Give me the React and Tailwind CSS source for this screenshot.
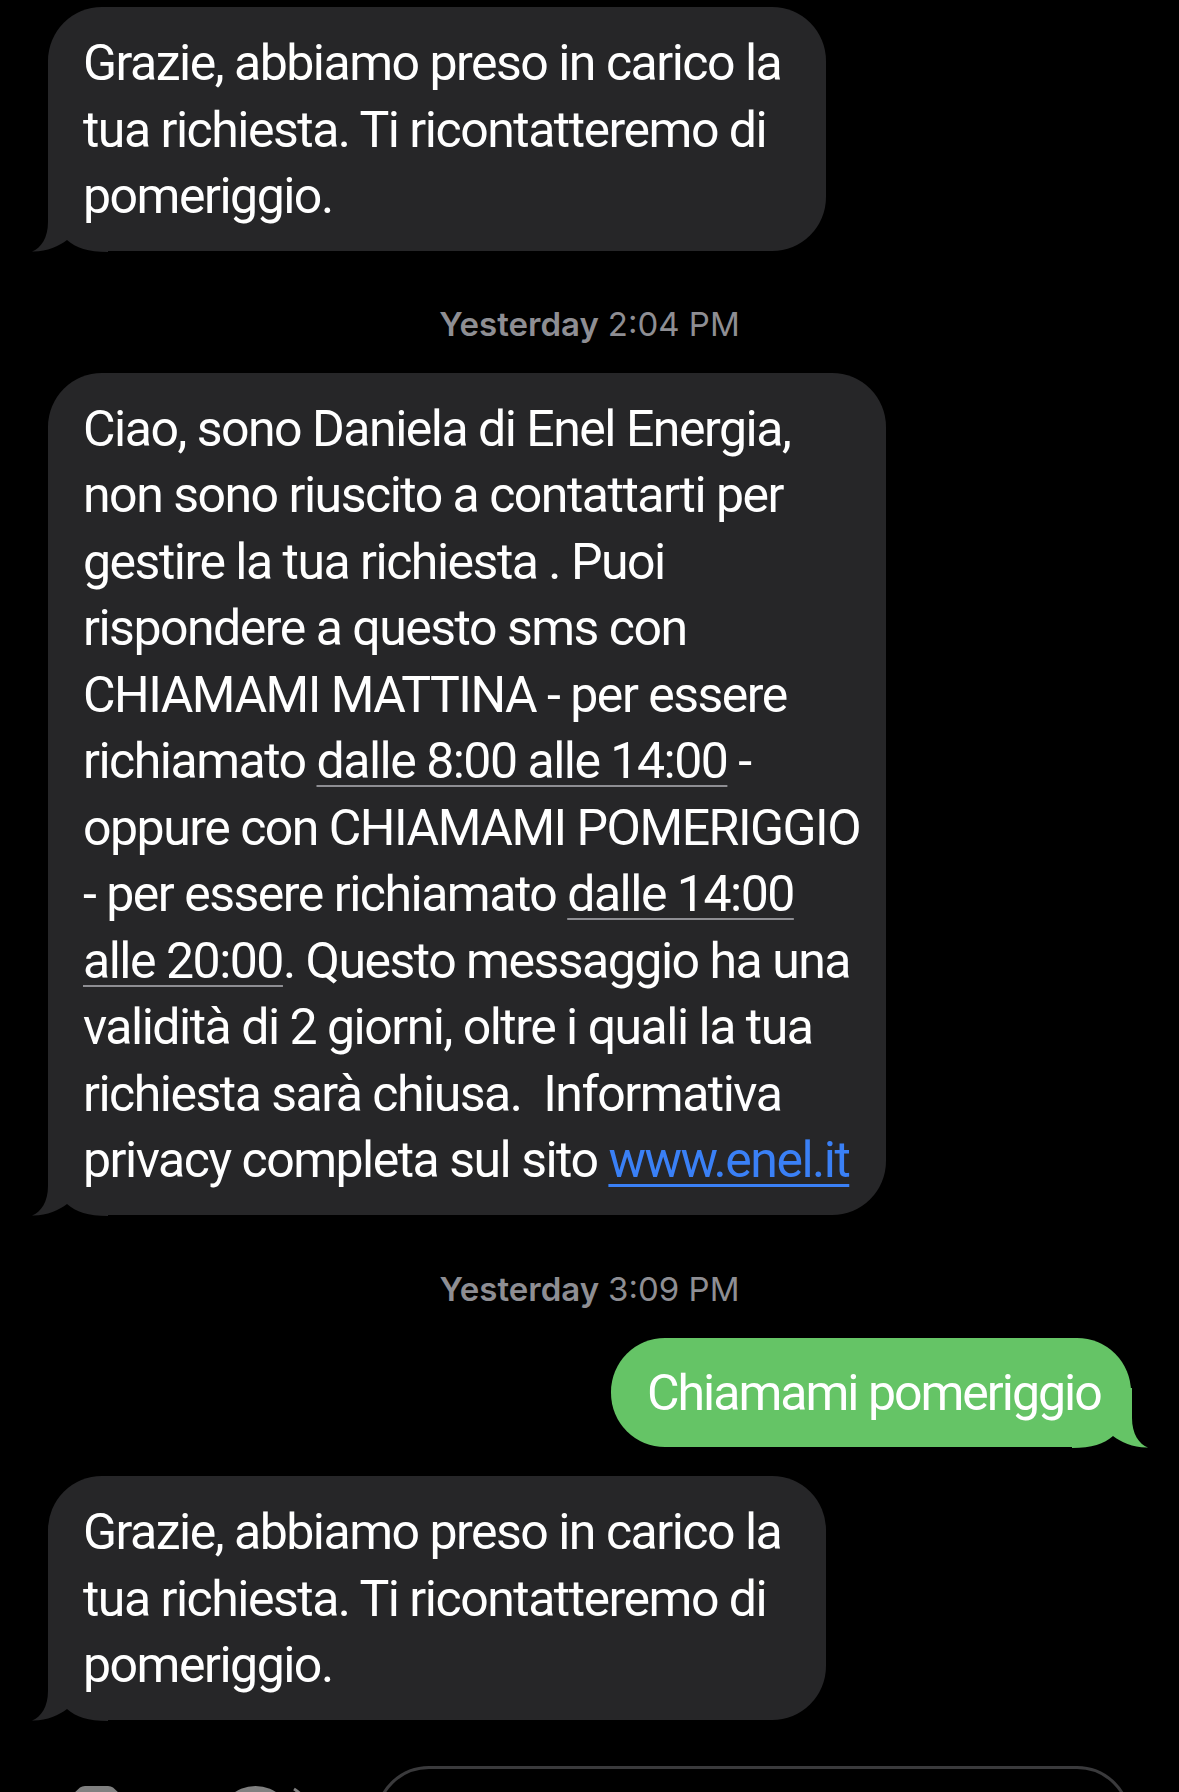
import React from "react";

const FONT = { fontFamily: "Roboto, Inter, 'Liberation Sans', sans-serif" };
const STAMP_FONT = { fontFamily: "Inter, 'Liberation Sans', sans-serif" };

function TailLeft({ color }) {
  return (
    <svg
      className="absolute left-[-16px] bottom-[-1px]"
      width="76"
      height="60"
      viewBox="0 0 76 60"
    >
      <path
        d="M16 0 L16 30 C16 46 9 56 0 59.5 C14 60 27 54 35 48 C44 56 56 60 76 60 L76 0 Z"
        fill={color}
      />
    </svg>
  );
}

function TailRight({ color }) {
  return (
    <svg
      className="absolute right-[-17px] bottom-[-1px]"
      width="76"
      height="60"
      viewBox="0 0 76 60"
    >
      <path
        d="M60 0 L60 30 C60 46 67 56 76 59.5 C62 60 49 54 41 48 C32 56 20 60 0 60 L0 0 Z"
        fill={color}
      />
    </svg>
  );
}

function Incoming({ width, lines }) {
  return (
    <div
      className={`relative self-start rounded-[54px] bg-[#262628] pl-[35px] pt-[23px] pb-[21px] ${width}`}
    >
      <TailLeft color="#262628" />
      <div className="relative text-white text-[50px] leading-[66.5px] tracking-[-1.5px] whitespace-nowrap">
        {lines.map((l, i) => (
          <div key={i}>{l}</div>
        ))}
      </div>
    </div>
  );
}

function Stamp({ time }) {
  return (
    <div
      className="flex h-[40px] items-center justify-center text-[33px] text-[#8e8e93]"
      style={STAMP_FONT}
    >
      <span className="font-semibold">Yesterday</span>
      <span className="ml-[9px]">{time}</span>
    </div>
  );
}

const U = ({ children }) => (
  <span className="underline decoration-[#8e8e93] decoration-2 underline-offset-[7px]">
    {children}
  </span>
);

export default function App() {
  const grazie = [
    "Grazie, abbiamo preso in carico la",
    "tua richiesta. Ti ricontatteremo di",
    "pomeriggio.",
  ];
  const ciao = [
    "Ciao, sono Daniela di Enel Energia,",
    "non sono riuscito a contattarti per",
    "gestire la tua richiesta . Puoi",
    "rispondere a questo sms con",
    "CHIAMAMI MATTINA - per essere",
    <>
      richiamato <U>dalle 8:00 alle 14:00</U> -
    </>,
    "oppure con CHIAMAMI POMERIGGIO",
    <>
      - per essere richiamato <U>dalle 14:00</U>
    </>,
    <>
      <U>alle 20:00</U>. Questo messaggio ha una
    </>,
    "validità di 2 giorni, oltre i quali la tua",
    <>richiesta sarà chiusa.&nbsp; Informativa</>,
    <>
      privacy completa sul sito{" "}
      <span className="text-[#3a80f6] underline decoration-[#3a80f6] decoration-3 underline-offset-[7px]">
        www.enel.it
      </span>
    </>,
  ];

  return (
    <div
      className="flex h-[1792px] w-[1179px] flex-col overflow-hidden bg-black px-[48px] pt-[7px]"
      style={FONT}
    >
      <Incoming width="w-[778px]" lines={grazie} />
      <div className="mt-[54px]">
        <Stamp time="2:04 PM" />
      </div>
      <div className="mt-[28px] flex flex-col">
        <Incoming width="w-[838px]" lines={ciao} />
      </div>
      <div className="mt-[55px]">
        <Stamp time="3:09 PM" />
      </div>
      <div className="mt-[28px] flex flex-col">
        <div className="relative self-end w-[520px] rounded-[54px] bg-[#65c466] pl-[36px] pt-[22px] pb-[21px]">
          <TailRight color="#65c466" />
          <div className="relative text-white text-[50px] leading-[66.5px] tracking-[-2px] whitespace-nowrap">
            Chiamami pomeriggio
          </div>
        </div>
      </div>
      <div className="mt-[29px] flex flex-col">
        <Incoming width="w-[778px]" lines={grazie} />
      </div>
      <div className="mt-[46px] -mx-[48px] flex h-[108px] items-start pr-[48px]">
        <svg
          className="ml-[62px] mt-[20px]"
          width="73"
          height="60"
          viewBox="0 0 73 60"
        >
          <path
            d="M10 9 L18 1.5 Q20 0 23 0 L46 0 Q49 0 51 1.5 L59 9 Z"
            fill="#808080"
          />
          <rect x="0" y="8" width="73" height="52" rx="10" fill="#808080" />
        </svg>
        <svg
          className="ml-[83px] mt-[20px]"
          width="90"
          height="80"
          viewBox="0 0 90 80"
        >
          <circle cx="37.5" cy="37.5" r="37.5" fill="#808080" />
          <path
            d="M76 3 C84 8 89 16 90 24"
            stroke="#808080"
            strokeWidth="3"
            fill="none"
          />
        </svg>
        <div className="ml-[67px] h-[108px] flex-1 rounded-[54px] border-[3px] border-[#3a3a3c]" />
      </div>
    </div>
  );
}
